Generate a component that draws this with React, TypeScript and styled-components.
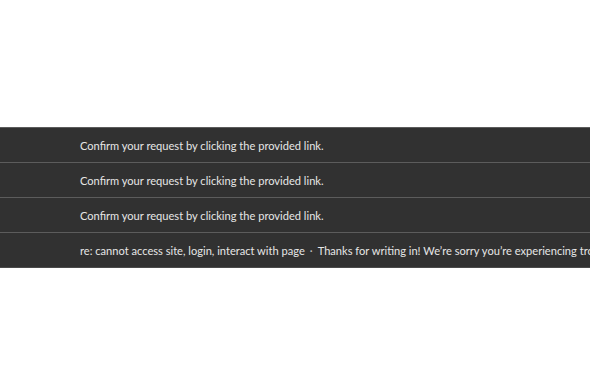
import React from "react";
import styled, { createGlobalStyle } from "styled-components";

const Global = createGlobalStyle`
  html, body { margin: 0; padding: 0; background: #ffffff; }
  body { font-family: Lato, "Open Sans", sans-serif; }
`;

const Page = styled.div`
  width: 590px;
  height: 380px;
  overflow: hidden;
  padding-top: 127px;
  box-sizing: border-box;
`;

const List = styled.ul`
  list-style: none;
  margin: 0;
  padding: 0;
  background: #313131;
  border-bottom: 1px solid #4a4a4a;
`;

const Row = styled.li`
  display: flex;
  align-items: center;
  height: 34px;
  border-top: 1px solid #5c5c5c;
  padding-left: 80px;
  color: #e6e6e6;
  font-size: 11.1px;
  white-space: nowrap;
  overflow: hidden;
`;

const Sep = styled.span`
  margin: 0 5px;
  color: #bdbdbd;
`;

const rows = [
  { subject: "Confirm your request by clicking the provided link." },
  { subject: "Confirm your request by clicking the provided link." },
  { subject: "Confirm your request by clicking the provided link." },
  {
    subject: "re: cannot access site, login, interact with page",
    snippet: "Thanks for writing in! We’re sorry you’re experiencing trouble accessing the site.",
  },
];

export default function App() {
  return (
    <>
      <Global />
      <Page>
        <List>
          {rows.map((r, i) => (
            <Row key={i}>
              {r.subject}
              {r.snippet && (
                <>
                  <Sep>·</Sep>
                  {r.snippet}
                </>
              )}
            </Row>
          ))}
        </List>
      </Page>
    </>
  );
}
